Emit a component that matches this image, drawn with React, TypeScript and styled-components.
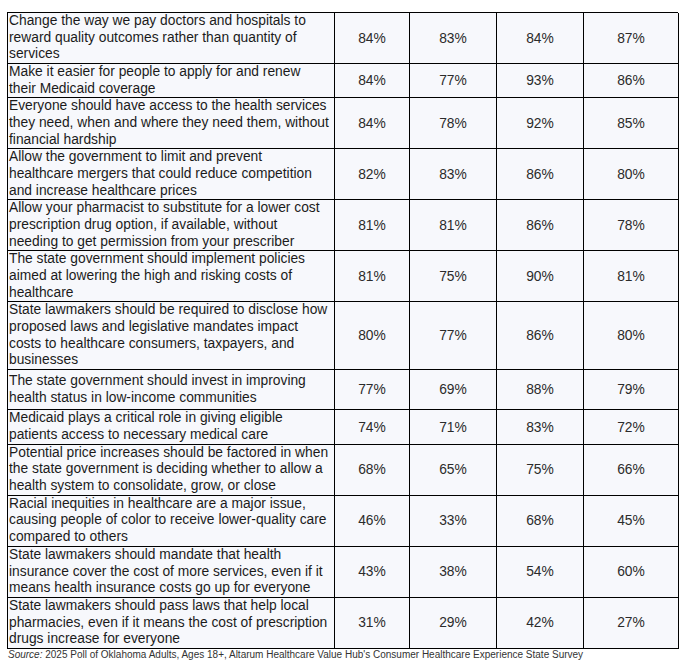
import React from "react";
import styled, { createGlobalStyle } from "styled-components";

const GlobalStyle = createGlobalStyle`
  html, body { margin: 0; padding: 0; background: #ffffff; }
  body { font-family: "Liberation Sans", Arial, sans-serif; }
`;

const Page = styled.div`
  padding: 12px 0 0 7px;
  width: 688px;
  height: 665px;
  box-sizing: border-box;
`;

const Table = styled.div`
  display: grid;
  grid-template-columns: 327px 75px 87px 87px 95px;
  width: 671px;
  box-sizing: border-box;
  border-top: 1px solid #000;
  border-left: 1px solid #000;
  background: #f7f8fc;
`;

const Cell = styled.div<{ $pad?: number }>`
  border-right: 1px solid #000;
  border-bottom: 1px solid #000;
  padding: ${(p) => p.$pad ?? 0}px 0;
  box-sizing: border-box;
  min-width: 0;
`;

const Statement = styled(Cell)`
  font-size: 13.8px;
  line-height: 16.67px;
  color: #1b1b1b;
  padding-left: 1px;
  white-space: nowrap;
  overflow: hidden;
`;

const Value = styled(Cell)`
  display: flex;
  align-items: center;
  justify-content: center;
  font-size: 13.8px;
  color: #2b2b2b;
`;

const Source = styled.div`
  margin-top: 0;
  padding-left: 1px;
  font-size: 10px;
  line-height: 12px;
  color: #333;
`;

const Em = styled.span`
  font-style: italic;
`;

type Row = { lines: string[]; values: string[]; pad?: number };

const rows: Row[] = [
  {
    lines: [
      "Change the way we pay doctors and hospitals to",
      "reward quality outcomes rather than quantity of",
      "services",
    ],
    values: ["84%", "83%", "84%", "87%"],
  },
  {
    lines: ["Make it easier for people to apply for and renew", "their Medicaid coverage"],
    values: ["84%", "77%", "93%", "86%"],
  },
  {
    lines: [
      "Everyone should have access to the health services",
      "they need, when and where they need them, without",
      "financial hardship",
    ],
    values: ["84%", "78%", "92%", "85%"],
  },
  {
    lines: [
      "Allow the government to limit and prevent",
      "healthcare mergers that could reduce competition",
      "and increase healthcare prices",
    ],
    values: ["82%", "83%", "86%", "80%"],
  },
  {
    lines: [
      "Allow your pharmacist to substitute for a lower cost",
      "prescription drug option, if available, without",
      "needing to get permission from your prescriber",
    ],
    values: ["81%", "81%", "86%", "78%"],
  },
  {
    lines: [
      "The state government should implement policies",
      "aimed at lowering the high and risking costs of",
      "healthcare",
    ],
    values: ["81%", "75%", "90%", "81%"],
  },
  {
    lines: [
      "State lawmakers should be required to disclose how",
      "proposed laws and legislative mandates impact",
      "costs to healthcare consumers, taxpayers, and",
      "businesses",
    ],
    values: ["80%", "77%", "86%", "80%"],
  },
  {
    lines: [
      "The state government should invest in improving",
      "health status in low-income communities",
    ],
    values: ["77%", "69%", "88%", "79%"],
    pad: 3,
  },
  {
    lines: [
      "Medicaid plays a critical role in giving eligible",
      "patients access to necessary medical care",
    ],
    values: ["74%", "71%", "83%", "72%"],
  },
  {
    lines: [
      "Potential price increases should be factored in when",
      "the state government is deciding whether to allow a",
      "health system to consolidate, grow, or close",
    ],
    values: ["68%", "65%", "75%", "66%"],
  },
  {
    lines: [
      "Racial inequities in healthcare are a major issue,",
      "causing people of color to receive lower-quality care",
      "compared to others",
    ],
    values: ["46%", "33%", "68%", "45%"],
  },
  {
    lines: [
      "State lawmakers should mandate that health",
      "insurance cover the cost of more services, even if it",
      "means health insurance costs go up for everyone",
    ],
    values: ["43%", "38%", "54%", "60%"],
  },
  {
    lines: [
      "State lawmakers should pass laws that help local",
      "pharmacies, even if it means the cost of prescription",
      "drugs increase for everyone",
    ],
    values: ["31%", "29%", "42%", "27%"],
  },
];

export default function App() {
  return (
    <>
      <GlobalStyle />
      <Page>
        <Table>
          {rows.map((r, i) => (
            <React.Fragment key={i}>
              <Statement $pad={r.pad}>
                {r.lines.map((l, j) => (
                  <React.Fragment key={j}>
                    {j > 0 && <br />}
                    {l}
                  </React.Fragment>
                ))}
              </Statement>
              {r.values.map((v, k) => (
                <Value key={k} $pad={r.pad}>
                  {v}
                </Value>
              ))}
            </React.Fragment>
          ))}
        </Table>
        <Source>
          <Em>Source:</Em> 2025 Poll of Oklahoma Adults, Ages 18+, Altarum Healthcare Value Hub's
          Consumer Healthcare Experience State Survey
        </Source>
      </Page>
    </>
  );
}
